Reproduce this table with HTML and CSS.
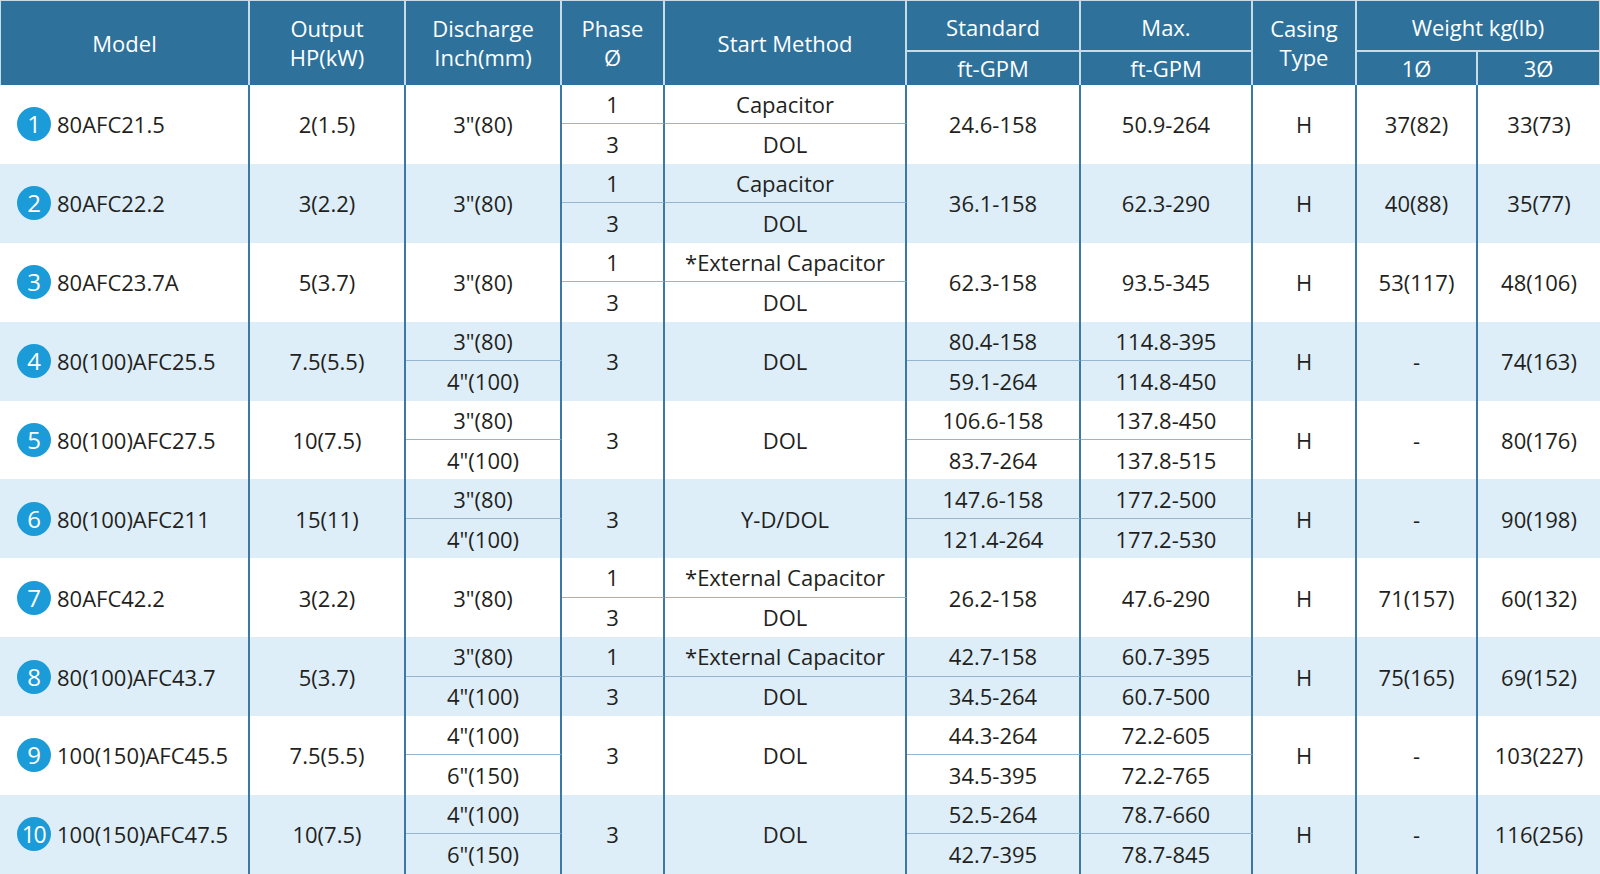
FILE: index.html
```html
<!DOCTYPE html>
<html lang="en">
<head>
<meta charset="utf-8">
<title>Pump Specifications</title>
<link rel="stylesheet" href="styles.css">
</head>
<body>
<table class="spec">
  <colgroup>
    <col class="c-model"><col class="c-out"><col class="c-dis"><col class="c-ph"><col class="c-start">
    <col class="c-std"><col class="c-max"><col class="c-cas"><col class="c-w1"><col class="c-w3">
  </colgroup>
  <thead>
    <tr class="h1">
      <th rowspan="2" class="first">Model</th>
      <th rowspan="2">Output<br>HP(kW)</th>
      <th rowspan="2">Discharge<br>Inch(mm)</th>
      <th rowspan="2">Phase<br>Ø</th>
      <th rowspan="2">Start Method</th>
      <th class="grp">Standard</th>
      <th class="grp">Max.</th>
      <th rowspan="2">Casing<br>Type</th>
      <th colspan="2" class="grp last">Weight kg(lb)</th>
    </tr>
    <tr class="h2">
      <th>ft-GPM</th>
      <th>ft-GPM</th>
      <th>1Ø</th>
      <th class="last">3Ø</th>
    </tr>
  </thead>

  <tbody class="white">
    <tr>
      <td rowspan="2" class="model"><div class="mwrap"><span class="badge">1</span>80AFC21.5</div></td>
      <td rowspan="2">2(1.5)</td>
      <td rowspan="2">3"(80)</td>
      <td class="top">1</td>
      <td class="top">Capacitor</td>
      <td rowspan="2">24.6-158</td>
      <td rowspan="2">50.9-264</td>
      <td rowspan="2">H</td>
      <td rowspan="2">37(82)</td>
      <td rowspan="2" class="last">33(73)</td>
    </tr>
    <tr><td>3</td><td>DOL</td></tr>
  </tbody>

  <tbody class="blue">
    <tr>
      <td rowspan="2" class="model"><div class="mwrap"><span class="badge">2</span>80AFC22.2</div></td>
      <td rowspan="2">3(2.2)</td>
      <td rowspan="2">3"(80)</td>
      <td class="top">1</td>
      <td class="top">Capacitor</td>
      <td rowspan="2">36.1-158</td>
      <td rowspan="2">62.3-290</td>
      <td rowspan="2">H</td>
      <td rowspan="2">40(88)</td>
      <td rowspan="2" class="last">35(77)</td>
    </tr>
    <tr><td>3</td><td>DOL</td></tr>
  </tbody>

  <tbody class="white">
    <tr>
      <td rowspan="2" class="model"><div class="mwrap"><span class="badge">3</span>80AFC23.7A</div></td>
      <td rowspan="2">5(3.7)</td>
      <td rowspan="2">3"(80)</td>
      <td class="top">1</td>
      <td class="top">*External Capacitor</td>
      <td rowspan="2">62.3-158</td>
      <td rowspan="2">93.5-345</td>
      <td rowspan="2">H</td>
      <td rowspan="2">53(117)</td>
      <td rowspan="2" class="last">48(106)</td>
    </tr>
    <tr><td>3</td><td>DOL</td></tr>
  </tbody>

  <tbody class="blue">
    <tr>
      <td rowspan="2" class="model"><div class="mwrap"><span class="badge">4</span>80(100)AFC25.5</div></td>
      <td rowspan="2">7.5(5.5)</td>
      <td class="top">3"(80)</td>
      <td rowspan="2">3</td>
      <td rowspan="2">DOL</td>
      <td class="top">80.4-158</td>
      <td class="top">114.8-395</td>
      <td rowspan="2">H</td>
      <td rowspan="2">-</td>
      <td rowspan="2" class="last">74(163)</td>
    </tr>
    <tr><td>4"(100)</td><td>59.1-264</td><td>114.8-450</td></tr>
  </tbody>

  <tbody class="white">
    <tr>
      <td rowspan="2" class="model"><div class="mwrap"><span class="badge">5</span>80(100)AFC27.5</div></td>
      <td rowspan="2">10(7.5)</td>
      <td class="top">3"(80)</td>
      <td rowspan="2">3</td>
      <td rowspan="2">DOL</td>
      <td class="top">106.6-158</td>
      <td class="top">137.8-450</td>
      <td rowspan="2">H</td>
      <td rowspan="2">-</td>
      <td rowspan="2" class="last">80(176)</td>
    </tr>
    <tr><td>4"(100)</td><td>83.7-264</td><td>137.8-515</td></tr>
  </tbody>

  <tbody class="blue">
    <tr>
      <td rowspan="2" class="model"><div class="mwrap"><span class="badge">6</span>80(100)AFC211</div></td>
      <td rowspan="2">15(11)</td>
      <td class="top">3"(80)</td>
      <td rowspan="2">3</td>
      <td rowspan="2">Y-D/DOL</td>
      <td class="top">147.6-158</td>
      <td class="top">177.2-500</td>
      <td rowspan="2">H</td>
      <td rowspan="2">-</td>
      <td rowspan="2" class="last">90(198)</td>
    </tr>
    <tr><td>4"(100)</td><td>121.4-264</td><td>177.2-530</td></tr>
  </tbody>

  <tbody class="white">
    <tr>
      <td rowspan="2" class="model"><div class="mwrap"><span class="badge">7</span>80AFC42.2</div></td>
      <td rowspan="2">3(2.2)</td>
      <td rowspan="2">3"(80)</td>
      <td class="top">1</td>
      <td class="top">*External Capacitor</td>
      <td rowspan="2">26.2-158</td>
      <td rowspan="2">47.6-290</td>
      <td rowspan="2">H</td>
      <td rowspan="2">71(157)</td>
      <td rowspan="2" class="last">60(132)</td>
    </tr>
    <tr><td>3</td><td>DOL</td></tr>
  </tbody>

  <tbody class="blue">
    <tr>
      <td rowspan="2" class="model"><div class="mwrap"><span class="badge">8</span>80(100)AFC43.7</div></td>
      <td rowspan="2">5(3.7)</td>
      <td class="top">3"(80)</td>
      <td class="top">1</td>
      <td class="top">*External Capacitor</td>
      <td class="top">42.7-158</td>
      <td class="top">60.7-395</td>
      <td rowspan="2">H</td>
      <td rowspan="2">75(165)</td>
      <td rowspan="2" class="last">69(152)</td>
    </tr>
    <tr><td>4"(100)</td><td>3</td><td>DOL</td><td>34.5-264</td><td>60.7-500</td></tr>
  </tbody>

  <tbody class="white">
    <tr>
      <td rowspan="2" class="model"><div class="mwrap"><span class="badge">9</span>100(150)AFC45.5</div></td>
      <td rowspan="2">7.5(5.5)</td>
      <td class="top">4"(100)</td>
      <td rowspan="2">3</td>
      <td rowspan="2">DOL</td>
      <td class="top">44.3-264</td>
      <td class="top">72.2-605</td>
      <td rowspan="2">H</td>
      <td rowspan="2">-</td>
      <td rowspan="2" class="last">103(227)</td>
    </tr>
    <tr><td>6"(150)</td><td>34.5-395</td><td>72.2-765</td></tr>
  </tbody>

  <tbody class="blue">
    <tr>
      <td rowspan="2" class="model"><div class="mwrap"><span class="badge two">10</span>100(150)AFC47.5</div></td>
      <td rowspan="2">10(7.5)</td>
      <td class="top">4"(100)</td>
      <td rowspan="2">3</td>
      <td rowspan="2">DOL</td>
      <td class="top">52.5-264</td>
      <td class="top">78.7-660</td>
      <td rowspan="2">H</td>
      <td rowspan="2">-</td>
      <td rowspan="2" class="last">116(256)</td>
    </tr>
    <tr><td>6"(150)</td><td>42.7-395</td><td>78.7-845</td></tr>
  </tbody>
</table>
</body>
</html>
```

FILE: styles.css
```css
html, body {
  margin: 0;
  padding: 0;
  background: #ffffff;
}

body {
  font-family: "Open Sans", "Noto Sans", "DejaVu Sans", sans-serif;
  color: #231f20;
}

.spec {
  width: 1600px;
  table-layout: fixed;
  border-collapse: separate;
  border-spacing: 0;
  font-size: 22px;
}

.c-model { width: 250px; }
.c-out   { width: 156px; }
.c-dis   { width: 156px; }
.c-ph    { width: 103px; }
.c-start { width: 242px; }
.c-std   { width: 174px; }
.c-max   { width: 172px; }
.c-cas   { width: 104px; }
.c-w1    { width: 121px; }
.c-w3    { width: 122px; }

/* Header */
.spec thead th {
  background: #2e729c;
  color: #ffffff;
  font-weight: 400;
  line-height: 29px;
  padding: 0;
  text-align: center;
  vertical-align: middle;
  border-right: 2px solid #c8dbe8;
}
.spec thead th.last { border-right: 1px solid #c8dbe8; }
.spec thead th.first { border-left: 1px solid #c8dbe8; }
.spec thead tr.h1 th { border-top: 1px solid #c8dbe8; }
.spec thead tr.h1 th.grp {
  border-bottom: 2px solid #c8dbe8;
  padding-top: 3px;
}
.spec thead tr.h1 { height: 52px; }
.spec thead tr.h2 { height: 33px; }

/* Body */
.spec tbody tr { height: 39.45px; }
.spec tbody.white { background: #ffffff; }
.spec tbody.blue { background: #ddeef8; }

.spec tbody td {
  padding: 0;
  text-align: center;
  vertical-align: middle;
  line-height: 26px;
  white-space: nowrap;
  border-right: 2px solid #3b78a6;
}
.spec tbody td.last { border-right: none; }
.spec tbody td.top { border-bottom: 1px solid #95b6d1; }

.spec tbody td.model { text-align: left; }

.mwrap {
  display: flex;
  align-items: center;
  gap: 6px;
  padding-left: 17px;
}

.badge {
  display: inline-flex;
  align-items: center;
  justify-content: center;
  width: 34px;
  height: 34px;
  border-radius: 50%;
  background: #1b9bd7;
  color: #ffffff;
  font-size: 24px;
  line-height: 1;
  flex: none;
}
.badge.two {
  font-size: 23px;
  letter-spacing: -1.5px;
  padding-right: 1px;
  box-sizing: border-box;
}
```
